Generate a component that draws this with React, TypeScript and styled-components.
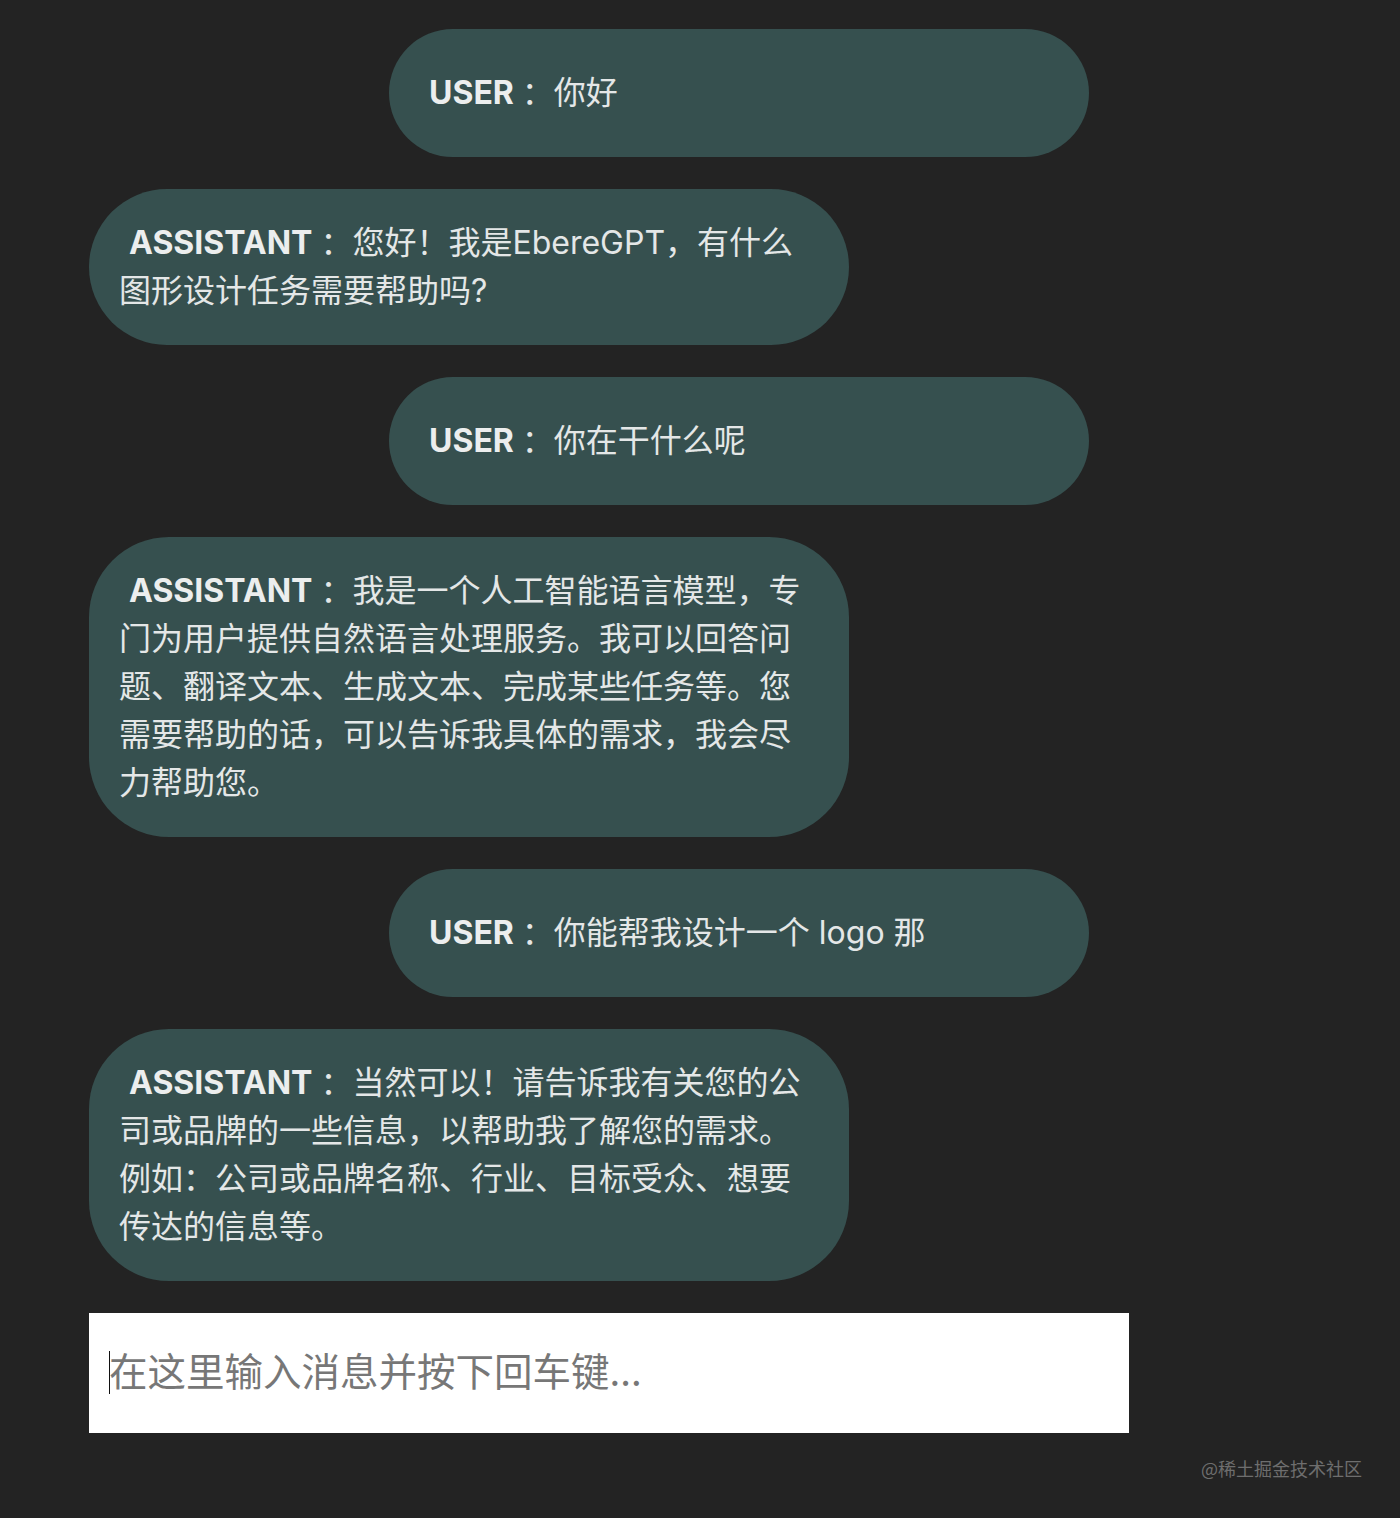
import React from "react";
import styled, { createGlobalStyle } from "styled-components";

const GlobalStyle = createGlobalStyle`
  html, body {
    margin: 0;
    padding: 0;
    background: #232323;
    min-height: 100%;
  }
  body {
    font-family: Inter, "Noto Sans CJK SC", sans-serif;
    color: #e6e8e8;
  }
  * { box-sizing: border-box; }
`;

const Page = styled.div`
  min-height: 1518px;
  background: #232323;
  padding: 29px 0 0 89px;
  display: flex;
  flex-direction: column;
`;

const Column = styled.div`
  width: 1040px;
  display: flex;
  flex-direction: column;
  gap: 32px;
`;

const Bubble = styled.div<{ $user?: boolean }>`
  width: ${(p) => (p.$user ? "700px" : "760px")};
  margin-left: ${(p) => (p.$user ? "300px" : "0")};
  padding: ${(p) => (p.$user ? "40px 30px" : "30px 30px")};
  background: #36504f;
  border-radius: 80px;
  font-size: 32px;
  line-height: 48px;
  color: #e4e7e7;
`;

const Role = styled.b`
  font-weight: 700;
  padding-left: 10px;
  color: #eceeee;
`;

const Colon = styled.span`
  margin-left: 8px;
`;

const InputBox = styled.div`
  position: relative;
  width: 1040px;
  height: 120px;
  background: #ffffff;
  &::before {
    content: "";
    position: absolute;
    left: 20px;
    top: 38px;
    width: 1px;
    height: 43px;
    background: #111;
  }
`;

const Input = styled.input`
  width: 100%;
  height: 100%;
  border: none;
  outline: none;
  background: transparent;
  padding: 0 20px 8px 20px;
  font-family: "Noto Sans CJK SC", sans-serif;
  font-size: 38.5px;
  color: #222;
  &::placeholder {
    color: #777;
  }
`;

const Footer = styled.div`
  margin-top: 25px;
  padding-right: 38px;
  text-align: right;
  font-family: "Noto Sans CJK SC", sans-serif;
  font-size: 18px;
  line-height: 20px;
  color: #6e6e6e;
`;

type Msg = { role: "USER" | "ASSISTANT"; text: string };

const messages: Msg[] = [
  { role: "USER", text: "你好" },
  { role: "ASSISTANT", text: "您好！我是EbereGPT，有什么图形设计任务需要帮助吗?" },
  { role: "USER", text: "你在干什么呢" },
  {
    role: "ASSISTANT",
    text:
      "我是一个人工智能语言模型，专门为用户提供自然语言处理服务。我可以回答问题、翻译文本、生成文本、完成某些任务等。您需要帮助的话，可以告诉我具体的需求，我会尽力帮助您。",
  },
  { role: "USER", text: "你能帮我设计一个 logo 那" },
  {
    role: "ASSISTANT",
    text:
      "当然可以！请告诉我有关您的公司或品牌的一些信息，以帮助我了解您的需求。例如：公司或品牌名称、行业、目标受众、想要传达的信息等。",
  },
];

export default function App() {
  return (
    <>
      <GlobalStyle />
      <Page>
        <Column>
          {messages.map((m, i) => (
            <Bubble key={i} $user={m.role === "USER"}>
              <Role>{m.role}</Role>
              <Colon>：</Colon>
              {m.text}
            </Bubble>
          ))}
          <InputBox>
            <Input placeholder="在这里输入消息并按下回车键..." />
          </InputBox>
        </Column>
        <Footer>@稀土掘金技术社区</Footer>
      </Page>
    </>
  );
}
